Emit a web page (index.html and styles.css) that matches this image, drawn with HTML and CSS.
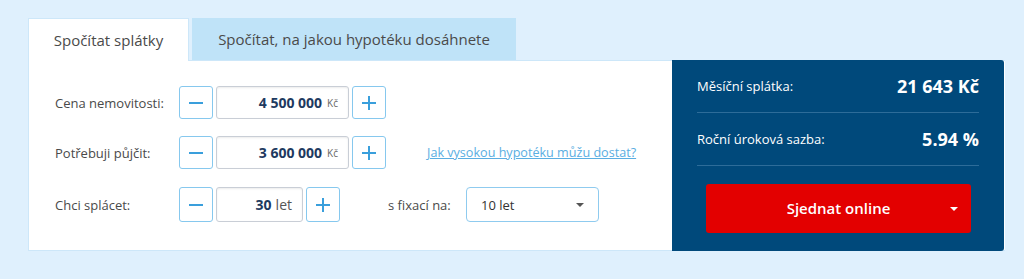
FILE: index.html
```html
<!DOCTYPE html>
<html lang="cs">
<head>
<meta charset="utf-8">
<link rel="stylesheet" href="styles.css">
</head>
<body>
<div class="wrap">
  <div class="tabs">
    <div class="tab active">Spočítat splátky</div>
    <div class="tab">Spočítat, na jakou hypotéku dosáhnete</div>
  </div>
  <div class="card">
    <div class="form">
      <div class="row">
        <div class="label">Cena nemovitosti:</div>
        <div class="stepper">
          <button class="btn"><span class="minus"></span></button>
          <div class="field wide"><b>4 500 000</b><span class="unit">Kč</span></div>
          <button class="btn"><span class="plus"></span></button>
        </div>
      </div>
      <div class="row">
        <div class="label">Potřebuji půjčit:</div>
        <div class="stepper">
          <button class="btn"><span class="minus"></span></button>
          <div class="field wide"><b>3 600 000</b><span class="unit">Kč</span></div>
          <button class="btn"><span class="plus"></span></button>
        </div>
        <a class="link" href="#">Jak vysokou hypotéku můžu dostat?</a>
      </div>
      <div class="row">
        <div class="label">Chci splácet:</div>
        <div class="stepper">
          <button class="btn"><span class="minus"></span></button>
          <div class="field narrow"><b>30</b><span class="unit let">let</span></div>
          <button class="btn"><span class="plus"></span></button>
        </div>
        <div class="fix-label">s fixací na:</div>
        <div class="select">10 let<span class="caret"></span></div>
      </div>
    </div>
    <div class="result">
      <div class="res-row"><span>Měsíční splátka:</span><strong>21 643 Kč</strong></div>
      <div class="res-row"><span>Roční úroková sazba:</span><strong>5.94 %</strong></div>
      <button class="cta">Sjednat online<span class="caret white"></span></button>
    </div>
  </div>
</div>
</body>
</html>
```
FILE: styles.css
```css
* { box-sizing: border-box; }
html, body { margin: 0; padding: 0; }
body {
  background: #dff0fd;
  font-family: "Open Sans", "Noto Sans", sans-serif;
  color: #4a4a4a;
  width: 1024px;
  height: 279px;
  overflow: hidden;
}
.wrap { margin: 18px 0 0 28px; width: 977px; }
.tabs { display: flex; gap: 3px; height: 43px; }
.tab {
  height: 42px;
  display: flex;
  align-items: center;
  justify-content: center;
  font-size: 15px;
  color: #4a4a4a;
  background: #bfe3f8;
  width: 324px;
}
.tab.active {
  width: 161px;
  background: #fff;
  border: 1px solid #cde7f9;
  border-bottom: none;
  height: 43px;
  position: relative;
  z-index: 1;
}
.card {
  display: flex;
  background: #fff;
  border: 1px solid #cde7f9;
  border-right: none;
  height: 191px;
  margin-top: -1px;
}
.form {
  width: 643px;
  padding: 25px 0 0 26px;
  display: flex;
  flex-direction: column;
  gap: 17px;
}
.row { display: flex; align-items: center; height: 33px; }
.row:nth-child(3) { margin-top: 1px; height: 35px; }
.label { width: 124px; font-size: 13px; color: #4a4a4a; }
.stepper { display: flex; gap: 3px; height: 100%; }
.btn {
  width: 34px;
  height: 100%;
  border: 1px solid #86c8ee;
  border-radius: 3px;
  background: #fff;
  position: relative;
  padding: 0;
  display: flex;
  align-items: center;
  justify-content: center;
}
.minus, .plus { display: block; width: 14px; height: 14px; position: relative; }
.minus::before, .plus::before, .plus::after {
  content: "";
  position: absolute;
  background: #3a9fdc;
}
.minus::before, .plus::before { left: 0; right: 0; top: 6px; height: 2px; }
.plus::after { top: 0; bottom: 0; left: 6px; width: 2px; }
.field {
  border: 1px solid #c9ced6;
  border-radius: 3px;
  box-shadow: inset 0 1px 2px rgba(0,0,0,0.08);
  display: flex;
  align-items: center;
  justify-content: flex-end;
  padding-right: 10px;
  font-size: 14px;
  color: #1e3a5f;
}
.field.wide { width: 133px; }
.field.narrow { width: 87px; }
.field b { font-weight: 700; }
.unit { font-size: 10px; color: #666; margin-left: 5px; margin-top: 1px; }
.unit.let { font-size: 14px; color: #555; margin-left: 4px; margin-top: 0; }
.link {
  margin-left: 41px;
  font-size: 12.6px;
  color: #5aaee2;
  text-decoration: underline;
}
.fix-label { margin-left: 48px; width: 78px; font-size: 13px; color: #4a4a4a; }
.select {
  width: 133px;
  height: 35px;
  border: 1px solid #8fcbef;
  border-radius: 4px;
  display: flex;
  align-items: center;
  padding-left: 14px;
  font-size: 13px;
  color: #333;
  position: relative;
}
.caret {
  position: absolute;
  right: 14px;
  top: 50%;
  margin-top: -2px;
  width: 0; height: 0;
  border-left: 4px solid transparent;
  border-right: 4px solid transparent;
  border-top: 4px solid #555;
}
.caret.white { border-top-color: #fff; right: 13px; }
.result {
  width: 332px;
  margin: -1px 0 -1px 0;
  background: #00497b;
  border-radius: 0 3px 3px 0;
  padding: 0 25px;
  display: flex;
  flex-direction: column;
}
.res-row {
  display: flex;
  justify-content: space-between;
  align-items: center;
  height: 53px;
  border-bottom: 1px solid #2d6c99;
  color: #fff;
  font-size: 13px;
  padding-bottom: 1px;
}
.res-row strong { font-size: 18px; font-weight: 700; }
.cta {
  margin: 18px 8px 0 9px;
  height: 49px;
  background: #e30000;
  border: none;
  border-radius: 3px;
  color: #fff;
  font-family: inherit;
  font-size: 15px;
  font-weight: 600;
  position: relative;
  padding: 0 0 2px 0;
}
```
